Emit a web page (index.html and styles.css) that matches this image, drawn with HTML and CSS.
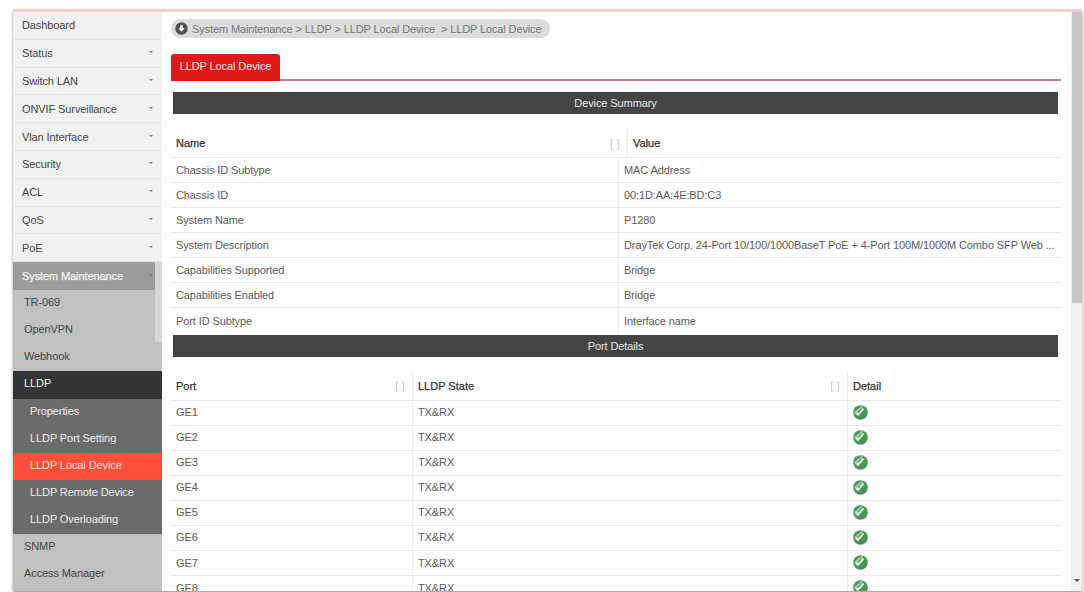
FILE: index.html
```html
<!DOCTYPE html>
<html lang="en">
<head>
    <meta charset="UTF-8">
    <meta name="viewport" content="width=device-width, initial-scale=1.0">
    <title>LLDP Local Device</title>
    <link rel="stylesheet" href="styles.css">
</head>
<body>
    <svg class="defs" width="0" height="0">
        <symbol id="detail" viewBox="0 0 16 16">
            <circle cx="8" cy="8" r="7.8" fill="#4c935a"/>
            <path d="M1 7.4 L9.6 0.8 L11 1.6 L2.4 9.4 Z" fill="#9fd0a8"/>
            <path d="M2.2 9.4 L4.6 7.4 L5.6 8.4 L10.4 3 L12 4.4 L5.4 12 Z" fill="#d4f3d8"/>
        </symbol>
        <symbol id="sort" viewBox="0 0 10 11">
            <path d="M3.4 1h-2v9h2M6.6 1h2v9h-2" stroke="#cfcfcf" stroke-width="1.2" fill="none"/>
        </symbol>
    </svg>
    <div class="window">
        <nav class="sidebar">
            <ul class="menu">
                <li>Dashboard</li>
                <li class="has-sub">Status</li>
                <li class="has-sub">Switch LAN</li>
                <li class="has-sub">ONVIF Surveillance</li>
                <li class="has-sub">Vlan Interface</li>
                <li class="has-sub">Security</li>
                <li class="has-sub">ACL</li>
                <li class="has-sub">QoS</li>
                <li class="has-sub">PoE</li>
                <li class="has-sub open">System Maintenance</li>
            </ul>
            <ul class="submenu">
                <li>TR-069</li>
                <li>OpenVPN</li>
                <li>Webhook</li>
                <li class="current">LLDP</li>
                <li class="leaf">Properties</li>
                <li class="leaf">LLDP Port Setting</li>
                <li class="leaf active">LLDP Local Device</li>
                <li class="leaf">LLDP Remote Device</li>
                <li class="leaf">LLDP Overloading</li>
                <li>SNMP</li>
                <li>Access Manager</li>
            </ul>
            <div class="sidebar-thumb"></div>
        </nav>
        <main class="content">
            <div class="breadcrumb">
                <svg width="13" height="13" viewBox="0 0 13 13">
                    <circle cx="6.5" cy="6.5" r="6.2" fill="#505050"/>
                    <path d="M5.2 3.2h2.6v3h2L6.5 9.8 3.2 6.2h2z" fill="#f4f4f4"/>
                </svg>
                <span>System Maintenance &gt; LLDP &gt; LLDP Local Device &nbsp;&gt; LLDP Local Device</span>
            </div>
            <div class="tabs"><div class="tab">LLDP Local Device</div></div>
            <h2 class="bar">Device Summary</h2>
            <div class="table summary">
                <div class="row head"><div>Name<svg class="sort"><use href="#sort"/></svg></div><div>Value</div></div>
                <div class="row"><div>Chassis ID Subtype</div><div>MAC Address</div></div>
                <div class="row"><div>Chassis ID</div><div>00:1D:AA:4E:BD:C3</div></div>
                <div class="row"><div>System Name</div><div>P1280</div></div>
                <div class="row"><div>System Description</div><div>DrayTek Corp. 24-Port 10/100/1000BaseT PoE + 4-Port 100M/1000M Combo SFP Web ...</div></div>
                <div class="row"><div>Capabilities Supported</div><div>Bridge</div></div>
                <div class="row"><div>Capabilities Enabled</div><div>Bridge</div></div>
                <div class="row"><div>Port ID Subtype</div><div>Interface name</div></div>
            </div>
            <h2 class="bar">Port Details</h2>
            <div class="table ports">
                <div class="row head"><div>Port<svg class="sort"><use href="#sort"/></svg></div><div>LLDP State<svg class="sort"><use href="#sort"/></svg></div><div>Detail</div></div>
                <div class="row"><div>GE1</div><div>TX&amp;RX</div><div><svg class="detail"><use href="#detail"/></svg></div></div>
                <div class="row"><div>GE2</div><div>TX&amp;RX</div><div><svg class="detail"><use href="#detail"/></svg></div></div>
                <div class="row"><div>GE3</div><div>TX&amp;RX</div><div><svg class="detail"><use href="#detail"/></svg></div></div>
                <div class="row"><div>GE4</div><div>TX&amp;RX</div><div><svg class="detail"><use href="#detail"/></svg></div></div>
                <div class="row"><div>GE5</div><div>TX&amp;RX</div><div><svg class="detail"><use href="#detail"/></svg></div></div>
                <div class="row"><div>GE6</div><div>TX&amp;RX</div><div><svg class="detail"><use href="#detail"/></svg></div></div>
                <div class="row"><div>GE7</div><div>TX&amp;RX</div><div><svg class="detail"><use href="#detail"/></svg></div></div>
                <div class="row"><div>GE8</div><div>TX&amp;RX</div><div><svg class="detail"><use href="#detail"/></svg></div></div>
            </div>
        </main>
        <div class="scrollbar">
            <div class="thumb"></div>
            <div class="arrow"></div>
        </div>
    </div>
</body>
</html>
```

FILE: styles.css
```css
* {
    box-sizing: border-box;
}

body {
    margin: 0;
    height: 592px;
    padding: 9px 2px 1px 13px;
    overflow: hidden;
    background: #fff;
    font-family: "Liberation Sans", Arial, sans-serif;
    font-size: 11px;
    color: #5c5c5c;
}

.defs {
    position: absolute;
}

.window {
    display: flex;
    height: 582px;
    border-top: 3px solid #f2d0cd;
    overflow: hidden;
    box-shadow: 0 2px 3px #999;
}

/* sidebar */
.sidebar {
    position: relative;
    flex: none;
    width: 149px;
    background: #c1c1c1;
    color: #444;
}

.menu, .submenu {
    list-style: none;
    margin: 0;
    padding: 0;
}

.menu li {
    display: flex;
    align-items: center;
    height: 27.8px;
    padding-left: 9px;
    background: #f1f1f1;
    border-bottom: 1px solid #e4e4e4;
    letter-spacing: -0.1px;
}

.menu .has-sub::after {
    content: "";
    margin: 0 9px 2px auto;
    border: 2.5px solid transparent;
    border-top: 2px solid #777;
    border-bottom: 0;
}

.menu .open {
    background: #9b9b9b;
    color: #f4f4f4;
    border-bottom: 0;
    -webkit-text-stroke: 0.25px #f4f4f4;
}

.submenu li {
    height: 27.15px;
    line-height: 25px;
    padding-left: 11px;
    letter-spacing: -0.1px;
}

.submenu .current {
    background: #353535;
    color: #f0f0f0;
}

.submenu .leaf {
    padding-left: 17px;
    background: #6b6b6b;
    color: #eee;
}

.submenu .active {
    background: #fd4f3a;
    color: #ffe0dc;
}

.sidebar-thumb {
    position: absolute;
    top: 250px;
    right: 0;
    width: 7px;
    height: 80px;
    background: #d6d6d6;
}

/* main area */
.content {
    flex: 1;
    min-width: 0;
    padding: 7px 10px 0 9px;
    background: #fefefe;
}

.breadcrumb {
    display: flex;
    align-items: center;
    gap: 4px;
    width: 379px;
    height: 19px;
    padding-left: 4px;
    border-radius: 10px;
    background: #dcdcdc;
    color: #777;
    white-space: nowrap;
    letter-spacing: -0.12px;
}

.tabs {
    display: flex;
    height: 27px;
    margin-top: 15.5px;
    border-bottom: 2px solid #b98083;
}

.tab {
    width: 109px;
    height: 27px;
    line-height: 25px;
    text-align: center;
    background: #dd1b1b;
    color: #ffe9e9;
    border-radius: 3px 3px 0 0;
    letter-spacing: -0.1px;
}

.bar {
    height: 22px;
    margin: 11.5px 3px 0 2px;
    line-height: 22px;
    text-align: center;
    font-size: 11px;
    font-weight: normal;
    background: #444;
    color: #e8e8e8;
    letter-spacing: -0.1px;
}

.row {
    display: grid;
    height: 25.08px;
    border-bottom: 1px solid #e9e9e9;
}

.summary .row {
    grid-template-columns: 447px 1fr;
}

.ports .row {
    grid-template-columns: 241px 435px 1fr;
}

.row > div {
    display: flex;
    align-items: center;
    padding: 0 0 1px 5px;
    white-space: nowrap;
    letter-spacing: -0.11px;
}

.row > div + div {
    border-left: 1px solid #ececec;
}

.row.head {
    height: 29px;
    margin-top: 15px;
    color: #333;
    -webkit-text-stroke: 0.25px #333;
}

.row.head > div {
    padding-bottom: 0;
    letter-spacing: 0;
}

.summary .row.head {
    grid-template-columns: 456px 1fr;
}

.summary .row:last-child {
    border-bottom: 0;
}

.summary + .bar {
    margin-top: 1px;
}

.sort {
    width: 10px;
    height: 11px;
    margin: 2px 7px 0 auto;
}

.detail {
    width: 15px;
    height: 15px;
}

/* page scrollbar */
.scrollbar {
    display: flex;
    flex-direction: column;
    justify-content: space-between;
    align-items: center;
    width: 11px;
    background: #f1f1f1;
}

.thumb {
    width: 10px;
    height: 291px;
    background: #c6c6c6;
}

.arrow {
    margin-bottom: 9px;
    border: 3px solid transparent;
    border-top: 3px solid #555;
    border-bottom: 0;
}
```
